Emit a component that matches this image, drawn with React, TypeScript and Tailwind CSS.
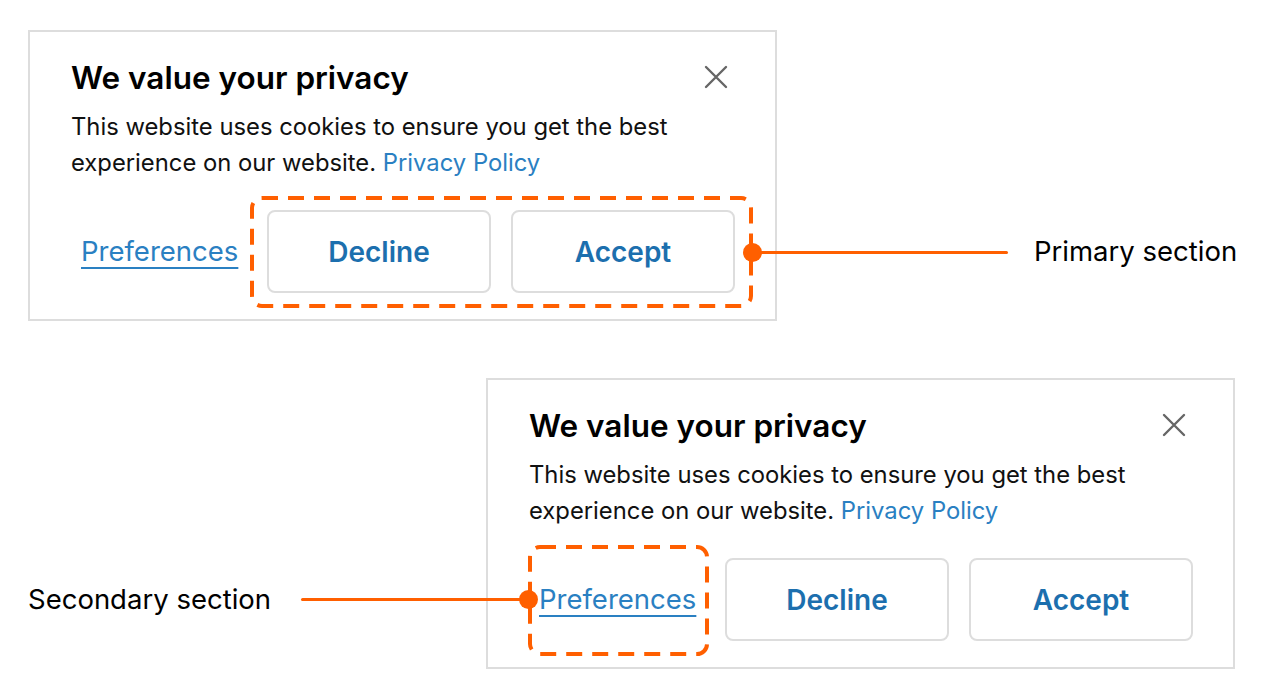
function DashBox({ w, h }: { w: number; h: number }) {
    return <svg width={w} height={h} className="absolute inset-0 overflow-visible">
        <rect x={2} y={2} width={w - 4} height={h - 4} rx={10} fill="none" stroke="#ff5f00" strokeWidth={4} strokeDasharray="16 10" />
    </svg>
}

function CloseIcon() {
    return <svg width="24" height="24" viewBox="0 0 24 24" className="mt-[7px] mr-[7px] shrink-0">
        <path d="M2 2L22 22M22 2L2 22" stroke="#666" strokeWidth={2.4} strokeLinecap="round" />
    </svg>
}

function Card({ children }: { children?: React.ReactNode }) {
    return <div className="relative w-[749px] h-[291px] border-2 border-[#dddddd] bg-white shrink-0">
        <div className="pl-[41px] pr-[40px] pt-[26px]">
            <div className="flex items-start justify-between">
                <h2 className="text-[31.5px] leading-[40px] font-semibold text-black">We value your privacy</h2>
                <CloseIcon />
            </div>
            <p className="mt-[11px] text-[23.8px] leading-[36px] text-[#111]">
                This website uses cookies to ensure you get the best<br />
                experience on our website. <a className="text-[#2a80c2]">Privacy Policy</a>
            </p>
            <div className="mt-[29px] flex items-center">
                <a className="px-[10px] text-[27.5px] text-[#2a80c2] underline underline-offset-[6px] decoration-2">Preferences</a>
                <div className="ml-auto flex gap-[20px]">
                    <button className="w-[224px] h-[83px] rounded-lg border-2 border-[#dddddd] text-[28px] font-semibold text-[#1c6fae]">Decline</button>
                    <button className="w-[224px] h-[83px] rounded-lg border-2 border-[#dddddd] text-[28px] font-semibold text-[#1c6fae]">Accept</button>
                </div>
            </div>
        </div>
        {children}
    </div>
}

export default function App() {
    return <div className="w-[1268px] h-[698px] bg-white font-['Inter',sans-serif] text-black overflow-hidden">
        <div className="flex items-start pt-[30px] pl-[28px]">
            <Card>
                <div className="absolute left-[220px] top-[164px] w-[503px] h-[112px]">
                    <DashBox w={503} h={112} />
                </div>
                <div className="absolute left-[722px] top-[219px] w-[256px] h-[3px] bg-[#ff5f00] rounded-full" />
                <div className="absolute left-[713px] top-[211px] w-[19px] h-[19px] rounded-full bg-[#ff5f00]" />
            </Card>
            <span className="ml-[257px] mt-[203px] text-[27.5px] leading-[36px]">Primary section</span>
        </div>
        <div className="flex items-start mt-[57px] pl-[28px]">
            <span className="mt-[203px] text-[27.5px] leading-[36px] w-[458px] shrink-0">Secondary section</span>
            <Card>
                <div className="absolute left-[40px] top-[165px] w-[181px] h-[111px]">
                    <DashBox w={181} h={111} />
                </div>
                <div className="absolute left-[-187px] top-[218px] w-[227px] h-[3px] bg-[#ff5f00] rounded-full" />
                <div className="absolute left-[31px] top-[210px] w-[19px] h-[19px] rounded-full bg-[#ff5f00]" />
            </Card>
        </div>
    </div>
}
